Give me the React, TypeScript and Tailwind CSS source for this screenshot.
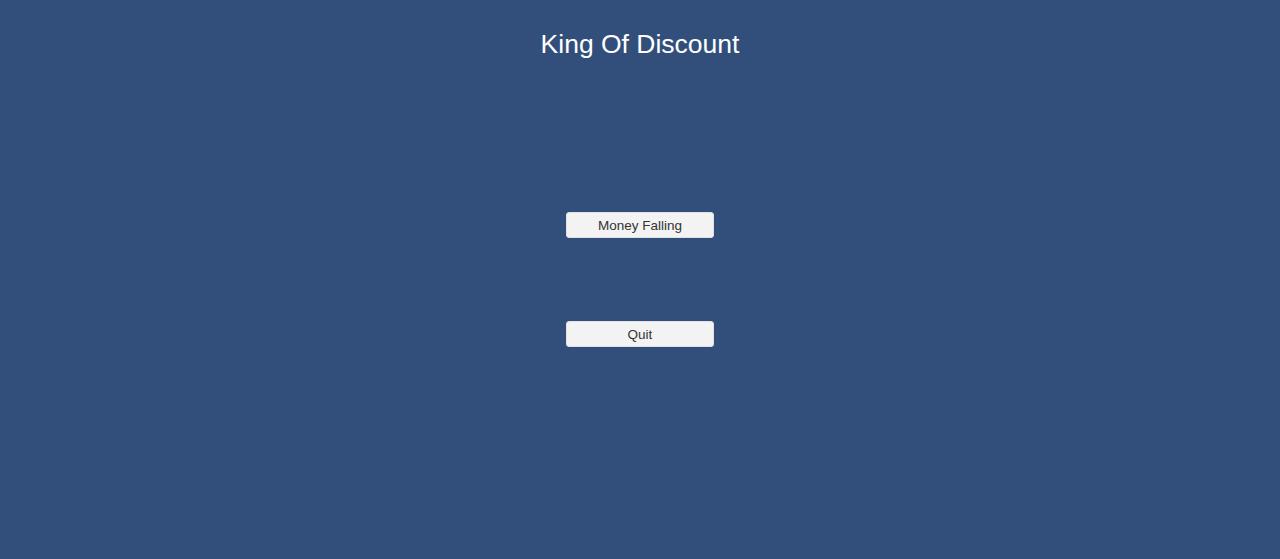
import React from 'react';

const MenuButton = ({ label }: { label: string }) => (
    <button
        type="button"
        className="w-[148px] h-[26px] rounded-[3px] bg-[#f3f3f3] border border-[#e2e2e2] pt-[2px] text-[13.5px] text-[#333333] leading-none flex items-center justify-center"
    >
        {label}
    </button>
);

const App = () => {
    return (
        <div
            className="w-full h-[559px] bg-[#314f7a] flex flex-col items-center pt-[29px]"
            style={{ fontFamily: '"Liberation Sans", Arial, sans-serif' }}
        >
            <h1 className="text-[26.5px] leading-[30px] text-white">King Of Discount</h1>
            <div className="mt-[153px] flex flex-col gap-[83px]">
                <MenuButton label="Money Falling" />
                <MenuButton label="Quit" />
            </div>
        </div>
    );
};

export default App;
